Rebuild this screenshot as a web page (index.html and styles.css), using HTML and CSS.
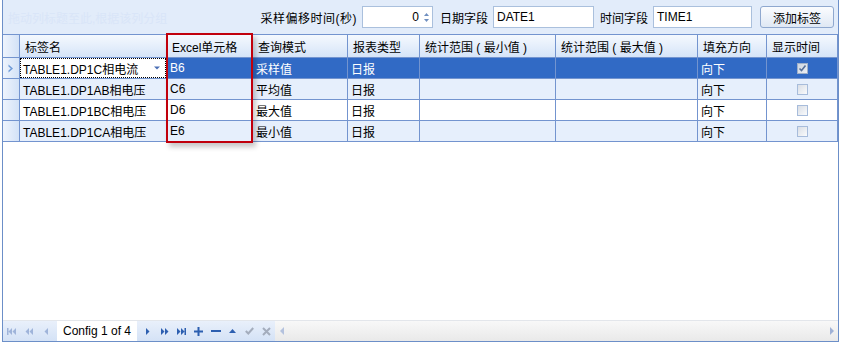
FILE: index.html
```html
<!DOCTYPE html>
<html lang="zh">
<head>
  <meta charset="UTF-8" />
  <title>标签配置</title>
  <link rel="stylesheet" href="styles.css">
</head>
<body>
  <div class="frame">
    <div class="toolbar">
      <span class="hint">拖动列标题至此,根据该列分组</span>
      <span class="label first">采样偏移时间(秒)</span>
      <div class="input spin">
        <span class="val">0</span>
        <svg class="spinbtn" width="7" height="13" viewBox="0 0 7 13">
          <path d="M3.5 2 L6 5 L1 5 Z" fill="#6f8fc0" />
          <path d="M1 8 L6 8 L3.5 11 Z" fill="#6f8fc0" />
        </svg>
      </div>
      <span class="label">日期字段</span>
      <div class="input date">DATE1</div>
      <span class="label">时间字段</span>
      <div class="input time">TIME1</div>
      <button class="btn">添加标签</button>
    </div>

    <table class="grid">
      <colgroup>
        <col class="c-ind"><col class="c-name"><col class="c-cell"><col class="c-mode"><col class="c-type">
        <col class="c-min"><col class="c-max"><col class="c-fill"><col class="c-time">
      </colgroup>
      <thead>
        <tr>
          <th class="ind"></th>
          <th>标签名</th>
          <th class="tight">Excel单元格</th>
          <th>查询模式</th>
          <th>报表类型</th>
          <th>统计范围 ( 最小值 )</th>
          <th>统计范围 ( 最大值 )</th>
          <th>填充方向</th>
          <th>显示时间</th>
        </tr>
      </thead>
      <tbody>
        <tr class="sel">
          <td class="ind">
            <svg width="6" height="9" viewBox="0 0 6 9"><path d="M0.5 0.5 L5 4.5 L0.5 8.5 L0.5 6.5 L2.8 4.5 L0.5 2.5 Z" fill="#6d9ad8" /></svg>
          </td>
          <td class="edit">
            <div class="editor">
              <span>TABLE1.DP1C相电流</span>
              <svg width="6" height="4" viewBox="0 0 6 4"><path d="M0 0.5 L6 0.5 L3 3.5 Z" fill="#4a6fb5" /></svg>
            </div>
          </td>
          <td class="tight">B6</td>
          <td>采样值</td>
          <td>日报</td>
          <td></td>
          <td></td>
          <td>向下</td>
          <td class="chk"><span class="box on">
            <svg width="9" height="9" viewBox="0 0 9 9"><path d="M1.5 4.5 L3.5 6.5 L7.5 1.5" stroke="#56709a" stroke-width="1.6" fill="none" /></svg>
          </span></td>
        </tr>
        <tr class="alt">
          <td class="ind"></td>
          <td>TABLE1.DP1AB相电压</td>
          <td class="tight">C6</td>
          <td>平均值</td>
          <td>日报</td>
          <td></td>
          <td></td>
          <td>向下</td>
          <td class="chk"><span class="box"></span></td>
        </tr>
        <tr>
          <td class="ind"></td>
          <td>TABLE1.DP1BC相电压</td>
          <td class="tight">D6</td>
          <td>最大值</td>
          <td>日报</td>
          <td></td>
          <td></td>
          <td>向下</td>
          <td class="chk"><span class="box"></span></td>
        </tr>
        <tr class="alt">
          <td class="ind"></td>
          <td>TABLE1.DP1CA相电压</td>
          <td class="tight">E6</td>
          <td>最小值</td>
          <td>日报</td>
          <td></td>
          <td></td>
          <td>向下</td>
          <td class="chk"><span class="box"></span></td>
        </tr>
      </tbody>
    </table>

    <div class="empty"></div>

    <div class="navbar">
      <div class="nav">
        <span class="nbtn"><svg width="9" height="7" viewBox="0 0 9 7"><path d="M0 0 H1.5 V7 H0 Z M5 0 V7 L1.5 3.5 Z M9 0 V7 L5.5 3.5 Z" fill="#9fb4da" /></svg></span>
        <span class="nbtn"><svg width="8" height="7" viewBox="0 0 8 7"><path d="M4 0 V7 L0.5 3.5 Z M8 0 V7 L4.5 3.5 Z" fill="#9fb4da" /></svg></span>
        <span class="nbtn"><svg width="4" height="7" viewBox="0 0 4 7"><path d="M4 0 V7 L0.5 3.5 Z" fill="#9fb4da" /></svg></span>
        <span class="pager">Config 1 of 4</span>
        <span class="nbtn"><svg width="4" height="7" viewBox="0 0 4 7"><path d="M0 0 V7 L3.5 3.5 Z" fill="#2d5fb0" /></svg></span>
        <span class="nbtn"><svg width="8" height="7" viewBox="0 0 8 7"><path d="M0 0 V7 L3.5 3.5 Z M4 0 V7 L7.5 3.5 Z" fill="#2d5fb0" /></svg></span>
        <span class="nbtn"><svg width="9" height="7" viewBox="0 0 9 7"><path d="M0 0 V7 L3.5 3.5 Z M4 0 V7 L7.5 3.5 Z M7.5 0 H9 V7 H7.5 Z" fill="#2d5fb0" /></svg></span>
        <span class="nbtn"><svg width="9" height="9" viewBox="0 0 9 9"><path d="M3.5 0 H5.5 V3.5 H9 V5.5 H5.5 V9 H3.5 V5.5 H0 V3.5 H3.5 Z" fill="#2d5fb0" /></svg></span>
        <span class="nbtn"><svg width="10" height="3" viewBox="0 0 10 3"><path d="M0 0 H10 V2 H0 Z" fill="#2d5fb0" /></svg></span>
        <span class="nbtn"><svg width="7" height="4" viewBox="0 0 7 4"><path d="M3.5 0 L7 4 L0 4 Z" fill="#2d5fb0" /></svg></span>
        <span class="nbtn"><svg width="9" height="8" viewBox="0 0 9 8"><path d="M0.8 4 L3.3 6.5 L8.2 1" stroke="#a4adbd" stroke-width="2" fill="none" /></svg></span>
        <span class="nbtn"><svg width="9" height="9" viewBox="0 0 9 9"><path d="M1 1 L8 8 M8 1 L1 8" stroke="#a4adbd" stroke-width="2" fill="none" /></svg></span>
      </div>
      <div class="hscroll">
        <svg width="4" height="8" viewBox="0 0 4 8"><path d="M4 0 V8 L0 4 Z" fill="#b4c2de" /></svg>
        <svg width="4" height="8" viewBox="0 0 4 8"><path d="M0 0 V8 L4 4 Z" fill="#9fb1d6" /></svg>
      </div>
    </div>

    <!-- cadre rouge autour de la colonne Excel -->
    <div class="mark"></div>
  </div>
</body>
</html>
```

FILE: styles.css
```css
body {
  margin: 0;
  font-family: "Liberation Sans", "Noto Sans CJK SC", sans-serif;
  font-size: 12px;
  color: #000;
  background: #fff;
}
.frame {
  position: relative;
  margin-left: 2px;
  width: 835px;
  height: 341px;
  border: 1px solid #6c8fc8;
  border-top: none;
  display: flex;
  flex-direction: column;
  background: #fff;
}

/* barre du haut */
.toolbar {
  height: 34px;
  flex: none;
  background: #e2ecfa;
  display: flex;
  align-items: center;
  padding: 0 4px 0 5px;
}
.hint {
  color: #d9e5f8;
  font-size: 12px;
}
.label {
  margin-right: 5px;
  white-space: nowrap;
}
.label.first {
  margin-left: auto;
  margin-right: 5px;
  letter-spacing: 0.5px;
}
.input {
  box-sizing: border-box;
  height: 22px;
  border: 1px solid #aac0dd;
  background: #fff;
  display: flex;
  align-items: center;
  padding: 0 3px;
  margin-right: 6px;
}
.spin {
  width: 71px;
  justify-content: flex-end;
  padding-right: 2px;
  margin-right: 7px;
}
.spin .val {
  margin-right: 4px;
}
.date {
  width: 101px;
}
.time {
  width: 99px;
  margin-right: 8px;
}
.btn {
  box-sizing: border-box;
  width: 74px;
  height: 22px;
  border: 1px solid #8fa8cf;
  border-radius: 3px;
  background: linear-gradient(#fbfcfe, #dfe8f4);
  font-family: inherit;
  font-size: 12px;
  color: #000;
  padding: 0;
}

/* grille */
.grid {
  border-collapse: separate;
  border-spacing: 0;
  table-layout: fixed;
  width: 835px;
  flex: none;
}
.c-ind { width: 17px; }
.c-name { width: 148px; }
.c-cell { width: 85px; }
.c-mode { width: 95px; }
.c-type { width: 72px; }
.c-min { width: 136px; }
.c-max { width: 142px; }
.c-fill { width: 69px; }
.c-time { width: 71px; }

.grid th,
.grid td {
  border-right: 1px solid #7394cf;
  border-bottom: 1px solid #7394cf;
  padding: 0 3px;
  height: 20px;
  text-align: left;
  font-weight: normal;
  white-space: nowrap;
  overflow: hidden;
}
.grid th {
  border-top: 1px solid #7394cf;
  height: 22px;
  padding-left: 5px;
  background: linear-gradient(#f5f9fe, #d5e4f8);
}
.grid .tight {
  padding-left: 2px;
}
.grid th.tight {
  padding-left: 4px;
}
.grid .ind {
  padding: 0;
  background: linear-gradient(to right, #eef4fd, #d3e2f7);
  text-align: center;
}
.grid td.ind svg {
  display: block;
  margin: 0 auto;
}
tr.alt td {
  background: #e6effc;
}
tr.sel td {
  background: #316ac5;
  color: #fff;
}
tr.sel td.ind,
tr.alt td.ind {
  background: linear-gradient(to right, #eef4fd, #d3e2f7);
}
tr.sel td.edit {
  padding: 0 1px 0 0;
  background: #fff;
  color: #000;
}
.editor {
  box-sizing: border-box;
  height: 20px;
  border: 1px dotted #000;
  display: flex;
  align-items: center;
  justify-content: space-between;
  padding: 0 5px 0 2px;
}
.grid td.chk {
  padding: 0;
  text-align: center;
}
.box {
  box-sizing: border-box;
  display: inline-block;
  width: 11px;
  height: 11px;
  border: 1px solid #a7bcdb;
  background: linear-gradient(135deg, #d9dee6, #fafbfc);
  vertical-align: middle;
}
.box.on {
  border-color: #9fb0c9;
  background: linear-gradient(135deg, #cdd5e0, #eceff4);
}
.box svg {
  display: block;
}

.empty {
  flex: 1;
}

/* barre de navigation */
.navbar {
  flex: none;
  box-sizing: border-box;
  height: 21px;
  border-top: 1px solid #e3e6eb;
  display: flex;
  background: linear-gradient(#f8f8f8, #e9e9e9);
}
.nav {
  width: 272px;
  display: flex;
  align-items: center;
  background: linear-gradient(#e9f0fb, #d4e2f6);
}
.nbtn {
  width: 17px;
  height: 20px;
  display: flex;
  align-items: center;
  justify-content: center;
}
.pager {
  height: 20px;
  width: 80px;
  margin: 0 2px 0 3px;
  background: #fff;
  display: flex;
  align-items: center;
  justify-content: center;
  font-size: 12px;
}
.hscroll {
  flex: 1;
  display: flex;
  align-items: center;
  justify-content: space-between;
  padding: 0 4px 0 5px;
}

.mark {
  position: absolute;
  left: 163px;
  top: 33px;
  width: 87px;
  height: 110px;
  box-sizing: border-box;
  border: 2px solid #c1000c;
  box-shadow: 3px 4px 5px rgba(0, 0, 0, 0.22);
  pointer-events: none;
}
```
